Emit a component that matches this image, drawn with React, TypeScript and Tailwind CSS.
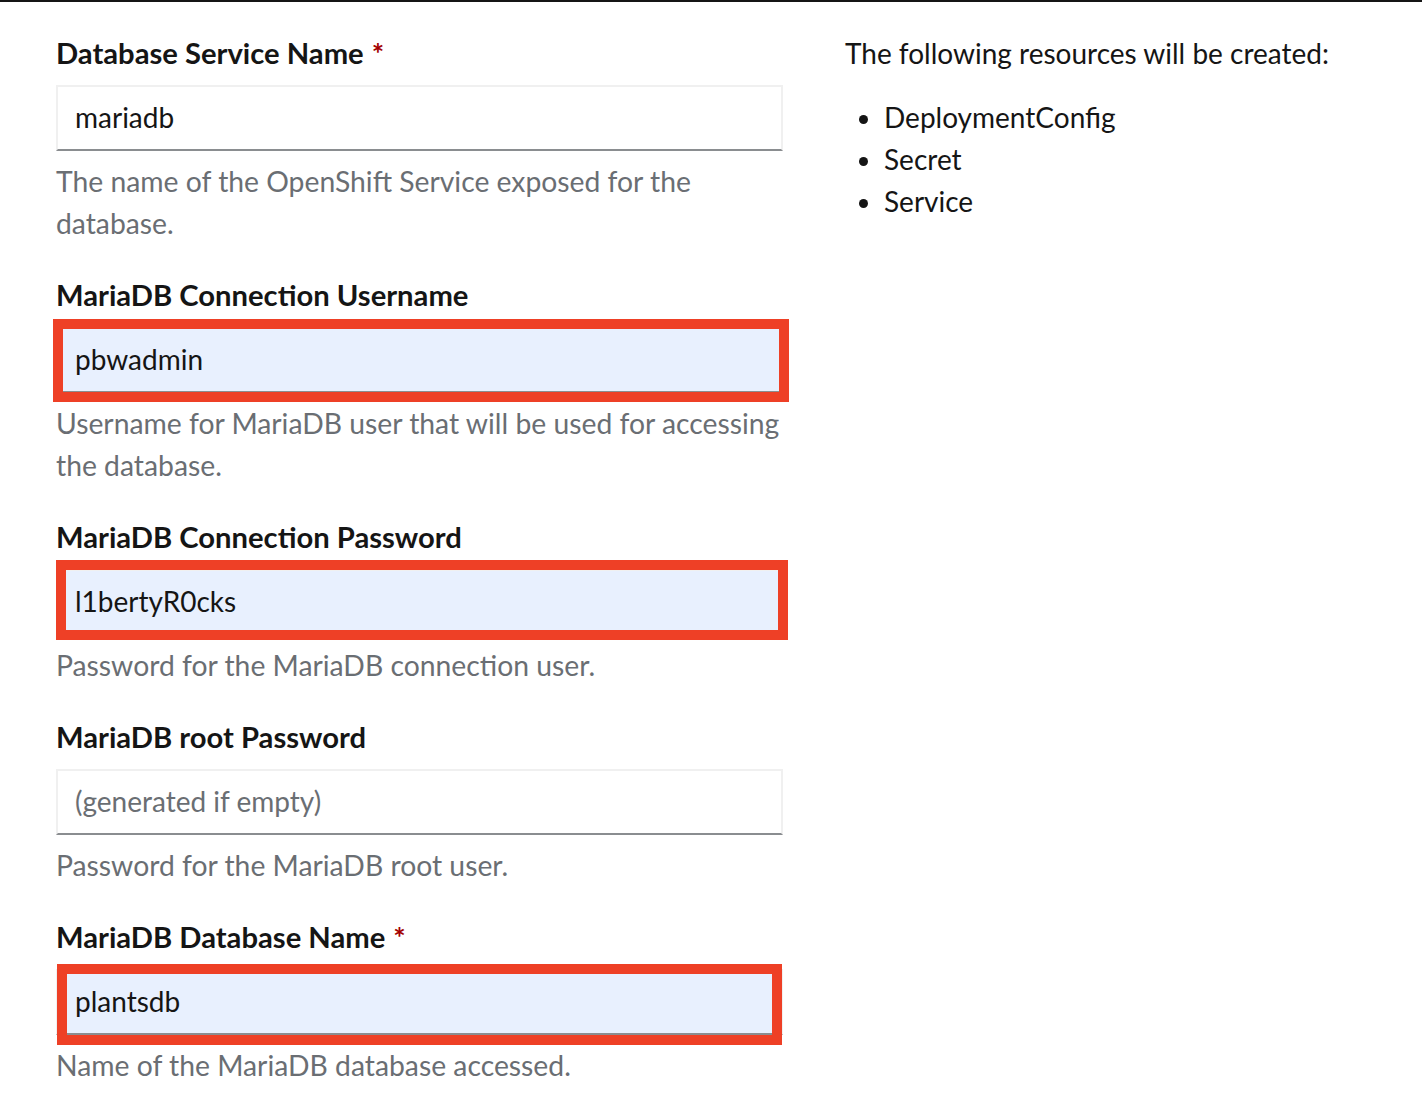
import React from 'react';

type Field = {
  label: string;
  required?: boolean;
  value?: string;
  placeholder?: string;
  autofilled?: boolean;
  helper: string;
  mark?: 'user' | 'pass' | 'db';
};

const fields: Field[] = [
  {
    label: 'Database Service Name',
    required: true,
    value: 'mariadb',
    helper: 'The name of the OpenShift Service exposed for the database.',
  },
  {
    label: 'MariaDB Connection Username',
    value: 'pbwadmin',
    autofilled: true,
    helper: 'Username for MariaDB user that will be used for accessing the database.',
    mark: 'user',
  },
  {
    label: 'MariaDB Connection Password',
    value: 'l1bertyR0cks',
    autofilled: true,
    helper: 'Password for the MariaDB connection user.',
    mark: 'pass',
  },
  {
    label: 'MariaDB root Password',
    placeholder: '(generated if empty)',
    helper: 'Password for the MariaDB root user.',
  },
  {
    label: 'MariaDB Database Name',
    required: true,
    value: 'plantsdb',
    autofilled: true,
    helper: 'Name of the MariaDB database accessed.',
    mark: 'db',
  },
];

// red annotation boxes drawn over the screenshot, each a little off the field
const markClass = {
  user: 'top-[-8px] left-[-3px] right-[-6px] bottom-[-9px]',
  pass: 'top-[-9px] left-0 right-[-5px] bottom-[-5px]',
  db: 'top-[-5px] left-[1px] right-[1px] bottom-[-10px]',
};

function FormField({ field }: { field: Field }) {
  return (
    <div className="flex flex-col">
      <label className="text-[29.2px] leading-[42px] font-bold text-[#151515]">
        {field.label}
        {field.required && <span className="text-[#a30000] ml-[8px]">*</span>}
      </label>
      <div className="relative mt-[11px]">
        <input
          readOnly
          defaultValue={field.value}
          placeholder={field.placeholder}
          className={
            'block w-full h-[66px] px-[17px] pb-[3px] text-[28px] text-[#151515] placeholder:text-[#6a6e73] outline-none border-2 border-[#f0f0f0] border-b-[#8a8d90] ' +
            (field.autofilled ? 'bg-[#e8f0fe]' : 'bg-white')
          }
        />
        {field.mark && (
          <div className={'absolute border-[10px] border-[#ee4026] pointer-events-none ' + markClass[field.mark]} />
        )}
      </div>
      <p className="mt-[9px] text-[28.3px] leading-[42px] text-[#6a6e73]">{field.helper}</p>
    </div>
  );
}

export default function App() {
  return (
    <div className="min-h-[1112px] bg-white border-t-2 border-[#151515] font-['Lato','Noto_Sans',sans-serif]">
      <div className="flex gap-[62px] pl-[56px] pt-[30px]">
        <div className="w-[727px] flex flex-col gap-[30px]">
          {fields.map((f) => (
            <FormField key={f.label} field={f} />
          ))}
        </div>
        <div className="flex-1 text-[#151515] text-[28px] leading-[42px]">
          <p>The following resources will be created:</p>
          <ul className="mt-[22px] list-disc pl-[39px]">
            <li>DeploymentConfig</li>
            <li>Secret</li>
            <li>Service</li>
          </ul>
        </div>
      </div>
    </div>
  );
}
